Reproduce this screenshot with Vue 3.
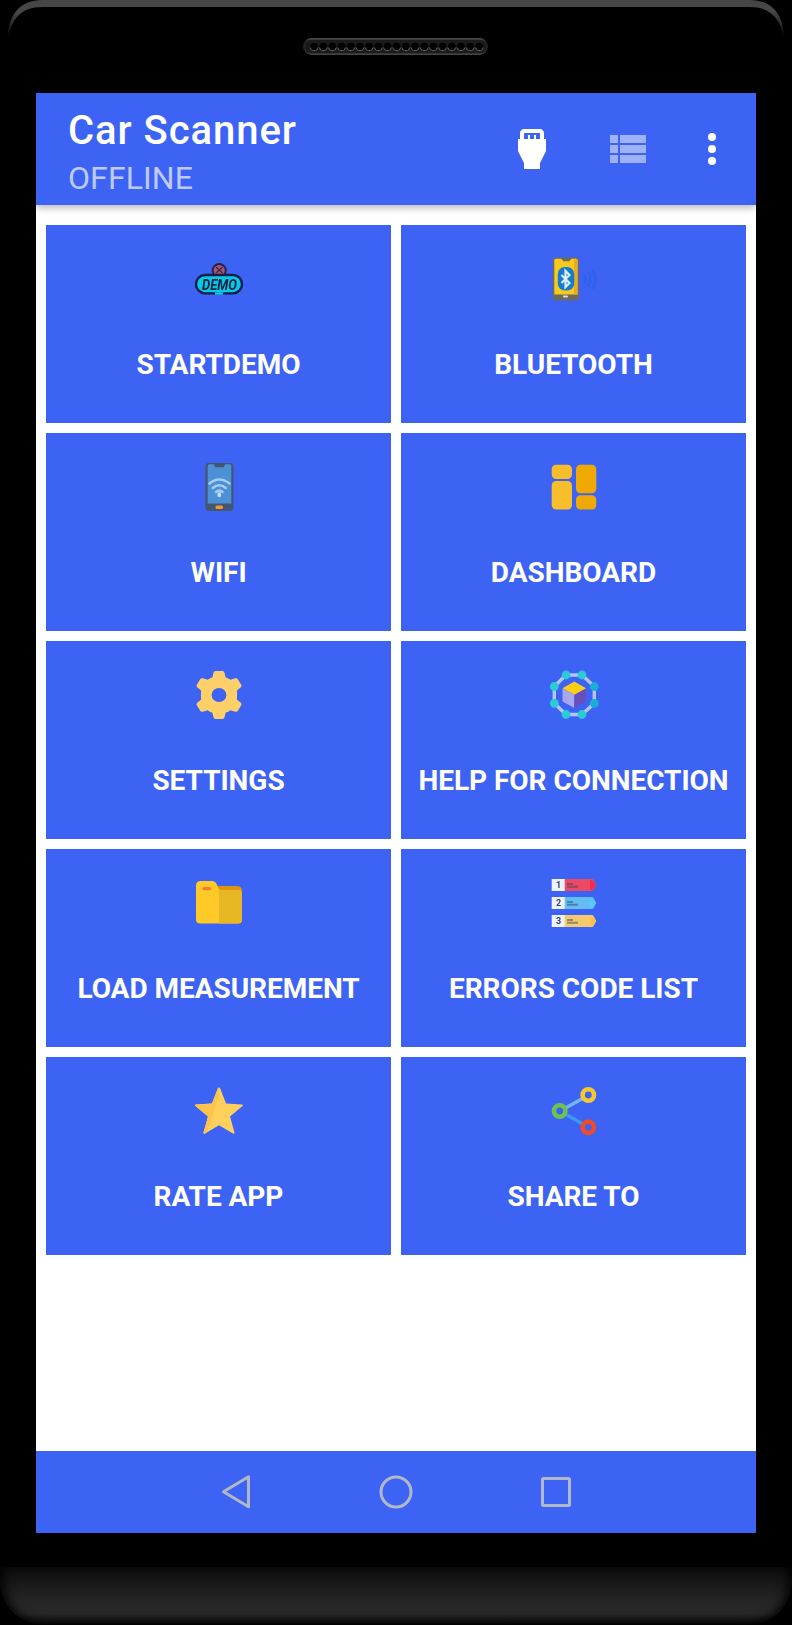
<script setup>
const tiles = [
  { icon: 'demo', label: 'STARTDEMO' },
  { icon: 'bluetooth', label: 'BLUETOOTH' },
  { icon: 'wifi', label: 'WIFI' },
  { icon: 'dashboard', label: 'DASHBOARD' },
  { icon: 'settings', label: 'SETTINGS' },
  { icon: 'help', label: 'HELP FOR CONNECTION' },
  { icon: 'folder', label: 'LOAD MEASUREMENT' },
  { icon: 'errors', label: 'ERRORS CODE LIST' },
  { icon: 'star', label: 'RATE APP' },
  { icon: 'share', label: 'SHARE TO' },
]
const nodes = [[16, 4], [32, 4], [44.3, 15.5], [44.3, 32.3], [32, 43.5], [16, 43.5], [4.3, 32.3], [4.3, 15.5]]
const ring = nodes.map((n) => n.join(',')).join(' ')
const rows = [
  { y: 0, n: '1', a: '#ea4a63', b: '#f0304a' },
  { y: 18, n: '2', a: '#62bdf3', b: '#56c8fa' },
  { y: 36, n: '3', a: '#f6c96c', b: '#ffc24a' },
]
</script>

<template>
  <div class="phone">
    <header class="bezel">
      <svg class="rim" width="792" height="93" viewBox="0 0 792 93">
        <defs>
          <linearGradient id="rimFade" x1="0" y1="0" x2="0" y2="38" gradientUnits="userSpaceOnUse">
            <stop offset="0" stop-color="#454545" />
            <stop offset=".3" stop-color="#484848" />
            <stop offset=".6" stop-color="#2c2c2c" />
            <stop offset="1" stop-color="#000" />
          </linearGradient>
          <linearGradient id="slot" x1="0" y1="0" x2="0" y2="1">
            <stop offset="0" stop-color="#515151" />
            <stop offset=".2" stop-color="#222" />
            <stop offset=".8" stop-color="#222" />
            <stop offset="1" stop-color="#484848" />
          </linearGradient>
        </defs>
        <path d="M8 38C8 15 20 0 42 0H750C772 0 784 15 784 38C780 19 771 7 750 7H42C21 7 12 19 8 38Z" fill="url(#rimFade)" />
        <rect x="303" y="38" width="185" height="17" rx="8.5" fill="url(#slot)" />
        <rect x="305" y="40" width="181" height="13" rx="6.5" fill="#1b1b1b" />
        <g v-for="i in 19" :key="i">
          <circle :cx="304.9 + i * 9.18" cy="46.8" r="4" fill="#030303" />
          <path :d="`M${301 + i * 9.18} 47.5a4 4 0 0 0 7.8 0`" fill="none" stroke="#585858" stroke-width="1.1" />
        </g>
      </svg>
    </header>

    <main class="screen">
      <div class="appbar">
        <div class="titles">
          <h1>Car Scanner</h1>
          <p>OFFLINE</p>
        </div>
        <svg class="plug" width="48" height="48" viewBox="0 0 24 24" fill="#fff">
          <path d="M18 7V4c0-1.100-.9-2-2-2H8c-1.100 0-2 .9-2 2v3H5v6l3 6v3h8v-3l3-6V7h-1zM8 4h8v3h-2V5h-1v2h-2V5h-1v2H8V4z" />
        </svg>
        <svg class="list" width="36" height="28" fill="#9fb1f9">
          <path d="M0 0h8v8H0zM10 0h26v8H10zM0 10h8v8H0zM10 10h26v8H10zM0 20h8v8H0zM10 20h26v8H10z" />
        </svg>
        <svg class="more" width="8" height="32" fill="#fff">
          <circle cx="4" cy="4" r="4" /><circle cx="4" cy="16" r="4" /><circle cx="4" cy="28" r="4" />
        </svg>
      </div>

      <div class="grid">
        <button v-for="t in tiles" :key="t.label" class="tile">
          <svg class="icon" width="48" height="48" viewBox="0 0 48 48">
            <g v-if="t.icon === 'demo'">
              <circle cx="24.2" cy="15.5" r="6.600" fill="#a15a70" stroke="#28204a" stroke-width="2" />
              <path d="M21 12l6.500 6M27.500 12L21 18" stroke="#40284c" stroke-width="1.400" />
              <rect x="1" y="20" width="46" height="18.400" rx="9.200" fill="#08c8e8" stroke="#101e48" stroke-width="2.400" />
              <path d="M20 38.500h8" stroke="#08c8e8" stroke-width="2.400" />
              <text x="24.500" y="34.500" text-anchor="middle" textLength="35" lengthAdjust="spacingAndGlyphs" class="demo-text">DEMO</text>
            </g>
            <g v-else-if="t.icon === 'bluetooth'">
              <rect x="2.800" y="2.500" width="26.200" height="43" rx="2.500" fill="#6c6b60" />
              <path d="M4.300 5.200q0-1.500 1.500-1.500h5.500l2 2.500h6l2-2.500h4.700q1.500 0 1.500 1.500V39.500H4.300z" fill="#f9c91c" />
              <path d="M24 3.700h2q1.500 0 1.500 1.500V39.500H24z" fill="#e9ac20" />
              <rect x="7.800" y="12" width="16.400" height="23.500" rx="7" fill="#167bd3" />
              <path d="M11.500 20l8 8-4 4V16l4 4-8 8" fill="none" stroke="#d9f0ff" stroke-width="2.200" />
              <rect x="13" y="40.500" width="5" height="2" rx="1" fill="#dedfd5" />
              <path d="M34 20q3 4 0 8M38 17q5 7 0 14M42.500 14q6 10 0 20" fill="none" stroke="#2c63ee" stroke-width="3" />
            </g>
            <g v-else-if="t.icon === 'wifi'">
              <rect x="10.400" y="0" width="28" height="48" rx="3.500" fill="#455671" />
              <path d="M12.700 3q0-1.700 2-1.700h4l1.500 3h8.600l1.500-3h4q2 0 2 1.700v37.400H12.700z" fill="#4c91d5" />
              <g fill="none" stroke="#a7cdf0" stroke-width="2.500" stroke-linecap="round">
                <path d="M14.500 20.500q9.500-8 20 0" /><path d="M17.800 25q6.500-5.500 13 0" /><path d="M21 29q3.300-2.700 6.600 0" />
              </g>
              <path d="M24.300 31v1.500" stroke="#c3e4fa" stroke-width="3.600" stroke-linecap="round" />
              <rect x="20.500" y="42.500" width="7.500" height="3.500" rx="1.500" fill="#f49b24" />
            </g>
            <g v-else-if="t.icon === 'dashboard'">
              <g fill="#f7bd2b"><rect x="1.700" y="1.700" width="20.300" height="14.300" rx="4.500" /><rect x="1.700" y="18" width="20.300" height="28.500" rx="4.500" /></g>
              <g fill="#f0a804"><rect x="26" y="1.700" width="20.300" height="28.500" rx="4.500" /><rect x="26" y="32.200" width="20.300" height="14.300" rx="4.500" /></g>
            </g>
            <path
              v-else-if="t.icon === 'settings'" fill="#ffd06a" fill-rule="evenodd" transform="translate(-1.5 0) scale(1.063 1)"
              d="M20.800 0h6.400q1.600 0 2 1.700l1 4.600q2.600 1 4.600 2.500l4.500-1.500q1.500-.5 2.400 1l3.200 5.500q.8 1.400-.4 2.500l-3.700 3.200q.5 4.500 0 9l3.700 3.200q1.200 1.100.4 2.500l-3.200 5.500q-.9 1.500-2.400 1l-4.500-1.500q-2 1.500-4.600 2.500l-1 4.600q-.4 1.700-2 1.700h-6.400q-1.600 0-2-1.700l-1-4.600q-2.600-1-4.600-2.500l-4.500 1.500q-1.500.5-2.400-1l-3.200-5.500q-.8-1.400.4-2.500l3.700-3.200q-.5-4.500 0-9l-3.700-3.200q-1.200-1.100-.4-2.500l3.200-5.500q.9-1.500 2.400-1l4.500 1.500q2-1.500 4.600-2.500l1-4.600q.4-1.700 2-1.700zM24 17a7 7 0 1 0 0 14a7 7 0 1 0 0-14z"
            />
            <g v-else-if="t.icon === 'help'">
              <polygon :points="ring" fill="none" stroke="#b3c6ff" stroke-width="3.400" />
              <circle v-for="(n, i) in nodes" :key="i" :cx="n[0]" :cy="n[1]" r="4.400" :fill="i === 2 || i === 3 ? '#18afd3' : '#2bcbd3'" />
              <path d="M12.500 17.500l11.800 6.200v13.200l-11.800-6.400z" fill="#a9a6f0" />
              <path d="M36 17.500l-11.700 6.200v13.200L36 30.500z" fill="#6550bd" />
              <path d="M24.300 10.500L36 17.300l-11.700 6.500-11.800-6.500z" fill="#fbcf16" />
            </g>
            <g v-else-if="t.icon === 'folder'">
              <path d="M20 7h22q5 0 5 5v8H20z" fill="#e09210" />
              <path d="M1 6.500Q1 2 5.500 2H17q3.500 0 5 4l1.500 3.500q.8 1.500 3 1.500H43q4 0 4 4v25.500q0 4-4 4H5q-4 0-4-4z" fill="#ffca28" />
              <path d="M24 11h19q4 0 4 4v25.500q0 4-4 4H24z" fill="#e8b824" />
              <rect x="7.500" y="8" width="8.500" height="3.200" rx="1.500" fill="#f47a30" />
            </g>
            <g v-else-if="t.icon === 'errors'">
              <g v-for="r in rows" :key="r.n">
                <path :d="`M14 ${r.y}h28q1 0 1.500 1l2.800 5l-2.800 5q-.5 1-1.500 1H14z`" :fill="r.a" />
                <path :d="`M40 ${r.y + 1}h2.500l3.500 5l-3.500 5H40z`" :fill="r.b" />
                <rect x="1.700" :y="r.y" width="13" height="12" fill="#edf2fb" />
                <text x="8.500" :y="r.y + 9.200" text-anchor="middle" class="row-number">{{ r.n }}</text>
                <path :d="`M17 ${r.y + 5}h6M17 ${r.y + 7.800}h11`" stroke="#35466a" stroke-opacity=".5" stroke-width="2" />
              </g>
            </g>
            <g v-else-if="t.icon === 'star'">
              <path d="M24 .5q.8 0 1.300 1.200L31 16.500l16 1q1.500.3.500 1.500L35 29.500l4.500 16q.1 1.700-1.500 1L24 38.300 10 46.500q-1.600.7-1.500-1l4.500-16L.500 19q-1-1.200.5-1.500l16-1 5.700-14.800Q23.200.500 24 .500z" fill="#ffd15c" />
              <path d="M24 .500q-.8 0-1.300 1.200L17 16.500l-16 1q-1.500.3-.5 1.500L13 29.500l-4.500 16q-.1 1.700 1.500 1l2-1.200L24 8z" fill="#fdc34d" />
            </g>
            <g v-else fill="none">
              <path d="M10 24L38 8.500" stroke="#72b5f4" stroke-width="3.400" />
              <path d="M10 24L38 40" stroke="#399af0" stroke-width="3.400" />
              <g fill="#3d63f4" stroke-width="4.600">
                <circle cx="38.300" cy="8" r="5.700" stroke="#f8c72d" /><circle cx="9.700" cy="24" r="5.700" stroke="#6ec34b" /><circle cx="38.300" cy="40.300" r="5.700" stroke="#ee4b28" />
              </g>
            </g>
          </svg>
          <span class="label">{{ t.label }}</span>
        </button>
      </div>

      <nav class="navbar">
        <svg width="360" height="40" viewBox="0 0 360 40" fill="none" stroke="#b0b7c7" stroke-width="3" stroke-linejoin="round">
          <path d="M32.500 4.800V34.800L7.500 19.800Z" />
          <circle cx="180" cy="20" r="15" />
          <rect x="326.500" y="6.500" width="27" height="27" rx="1" />
        </svg>
      </nav>
    </main>

    <footer class="chin"></footer>
  </div>
</template>

<style>
body {
  margin: 0;
  background: #000;
}
</style>

<style scoped>
.phone {
  width: 792px;
  height: 1625px;
  display: flex;
  flex-direction: column;
  align-items: center;
  background: #000;
  font-family: Roboto, "Liberation Sans", sans-serif;
  overflow: hidden;
}
.bezel {
  height: 93px;
}
.rim {
  display: block;
}
.screen {
  width: 720px;
  height: 1440px;
  display: flex;
  flex-direction: column;
  background: #fff;
}
.appbar {
  height: 112px;
  box-sizing: border-box;
  display: flex;
  align-items: center;
  padding: 0 40px 0 32px;
  background: #3d63f4;
  color: #fff;
  box-shadow: 0 3px 7px rgba(0, 0, 0, 0.28);
  clip-path: inset(0 0 -14px 0);
}
.titles {
  flex: 1;
  padding-top: 10px;
}
h1 {
  margin: 0;
  font-size: 40px;
  line-height: 48px;
  font-weight: 500;
  letter-spacing: 0.95px;
}
p {
  margin: 0;
  font-size: 32px;
  line-height: 46px;
  font-weight: 400;
  letter-spacing: 0.1px;
  color: #bdcafa;
}
.list {
  margin-left: 54px;
}
.more {
  margin-left: 62px;
}
.grid {
  flex: 1;
  display: grid;
  grid-template-columns: 345px 345px;
  grid-auto-rows: 198px;
  align-content: start;
  gap: 10px;
  padding: 20px 10px 0;
}
.tile {
  display: flex;
  flex-direction: column;
  align-items: center;
  gap: 45px;
  padding: 30px 0 0;
  border: 0;
  background: #3d63f4;
  color: #fff;
  font-family: inherit;
}
.icon {
  display: block;
  overflow: visible;
  filter: blur(0.5px);
}
.label {
  font-size: 28px;
  line-height: 34px;
  font-weight: 700;
  letter-spacing: -0.03px;
  white-space: nowrap;
}
.demo-text {
  font: italic 700 14.5px Roboto, sans-serif;
  fill: #10203f;
}
.row-number {
  font: 700 9px Roboto, sans-serif;
  fill: #344563;
}
.navbar {
  height: 82px;
  display: flex;
  align-items: center;
  justify-content: center;
  background: #3d63f4;
}
.chin {
  width: 792px;
  height: 58px;
  margin-top: 34px;
  background: linear-gradient(#0c0c0c, #262626 60%, #282828 80%, #0c0c0c 97%, #000);
  border-radius: 0 0 44px 44px;
  box-shadow: inset 9px -2px 12px -6px #000, inset -9px -2px 12px -6px #000;
}
</style>
